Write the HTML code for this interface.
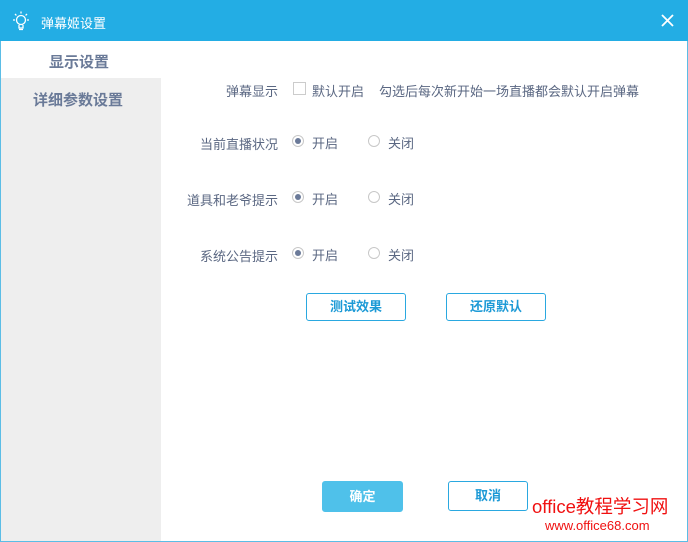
<!DOCTYPE html><html><head><meta charset="utf-8"><style>
body{margin:0;width:688px;height:542px;position:relative;overflow:hidden;background:#fff;font-family:"Liberation Sans","Noto Sans CJK SC",sans-serif;}
.win{position:absolute;left:0;top:0;width:686px;height:540px;border:1px solid #5bbde6;}
.title{position:absolute;left:0;top:0;width:688px;height:41px;background:#23ade4;color:#fff;font-size:13px;}
.side{position:absolute;left:1px;top:78px;width:160px;height:463px;background:#eeeeee;}
.t{position:absolute;font-size:13px;color:#5a6782;white-space:nowrap;}
.nav{position:absolute;font-size:15px;font-weight:bold;color:#6a7a98;}
.rad{position:absolute;width:10px;height:10px;border:1px solid #c8c8c8;border-radius:50%;background:#fff;}
.rad.on::after{content:"";position:absolute;left:2px;top:2px;width:6px;height:6px;border-radius:50%;background:#6b7a99;}
.btn{position:absolute;height:26px;border:1px solid #2aa8e0;border-radius:3px;color:#1d9ad6;font-size:13px;font-weight:bold;text-align:center;line-height:26px;background:#fff;}
</style></head><body>
<div class="win"></div>
<div class="title">
<svg style="position:absolute;left:10px;top:10px" width="22" height="22" viewBox="0 0 22 22" fill="none" stroke="#fff" stroke-width="1.3"><circle cx="11" cy="10" r="4.5"/><path d="M9 15v3h4v-3M9 19.5h4M11 1.5v2M3 10h2M17 10h2M5 4l1.4 1.4M17 4l-1.4 1.4"/></svg>
<span style="position:absolute;left:41px;top:13px">弹幕姬设置</span>
<svg style="position:absolute;left:661px;top:14px" width="13" height="13" viewBox="0 0 13 13" stroke="#fff" stroke-width="1.8"><path d="M1 1L12 12M12 1L1 12"/></svg>
</div>
<div class="side"></div>
<div class="nav" style="left:49px;top:51px">显示设置</div>
<div class="nav" style="left:33px;top:89px">详细参数设置</div>
<div class="t" style="left:226px;top:81px">弹幕显示</div>
<div style="position:absolute;left:293px;top:82px;width:11px;height:11px;border:1px solid #ccc"></div>
<div class="t" style="left:312px;top:81px">默认开启</div>
<div class="t" style="left:379px;top:81px">勾选后每次新开始一场直播都会默认开启弹幕</div>
<div class="t" style="left:200px;top:134px">当前直播状况</div>
<div class="rad on" style="left:292px;top:135px"></div><div class="t" style="left:312px;top:133px">开启</div>
<div class="rad" style="left:368px;top:135px"></div><div class="t" style="left:388px;top:133px">关闭</div>
<div class="t" style="left:187px;top:190px">道具和老爷提示</div>
<div class="rad on" style="left:292px;top:191px"></div><div class="t" style="left:312px;top:189px">开启</div>
<div class="rad" style="left:368px;top:191px"></div><div class="t" style="left:388px;top:189px">关闭</div>
<div class="t" style="left:200px;top:246px">系统公告提示</div>
<div class="rad on" style="left:292px;top:247px"></div><div class="t" style="left:312px;top:245px">开启</div>
<div class="rad" style="left:368px;top:247px"></div><div class="t" style="left:388px;top:245px">关闭</div>
<div class="btn" style="left:306px;top:293px;width:98px">测试效果</div>
<div class="btn" style="left:446px;top:293px;width:98px">还原默认</div>
<div class="btn" style="left:322px;top:481px;width:79px;height:29px;line-height:29px;background:#4fc1ea;border-color:#4fc1ea;color:#fff">确定</div>
<div class="btn" style="left:448px;top:481px;width:78px;height:28px;line-height:28px">取消</div>
<div style="position:absolute;left:532px;top:493px;color:#f01010;font-size:18.5px;white-space:nowrap">office教程学习网</div>
<div style="position:absolute;left:545px;top:518px;color:#f01010;font-size:13px">www.office68.com</div>
</body></html>
